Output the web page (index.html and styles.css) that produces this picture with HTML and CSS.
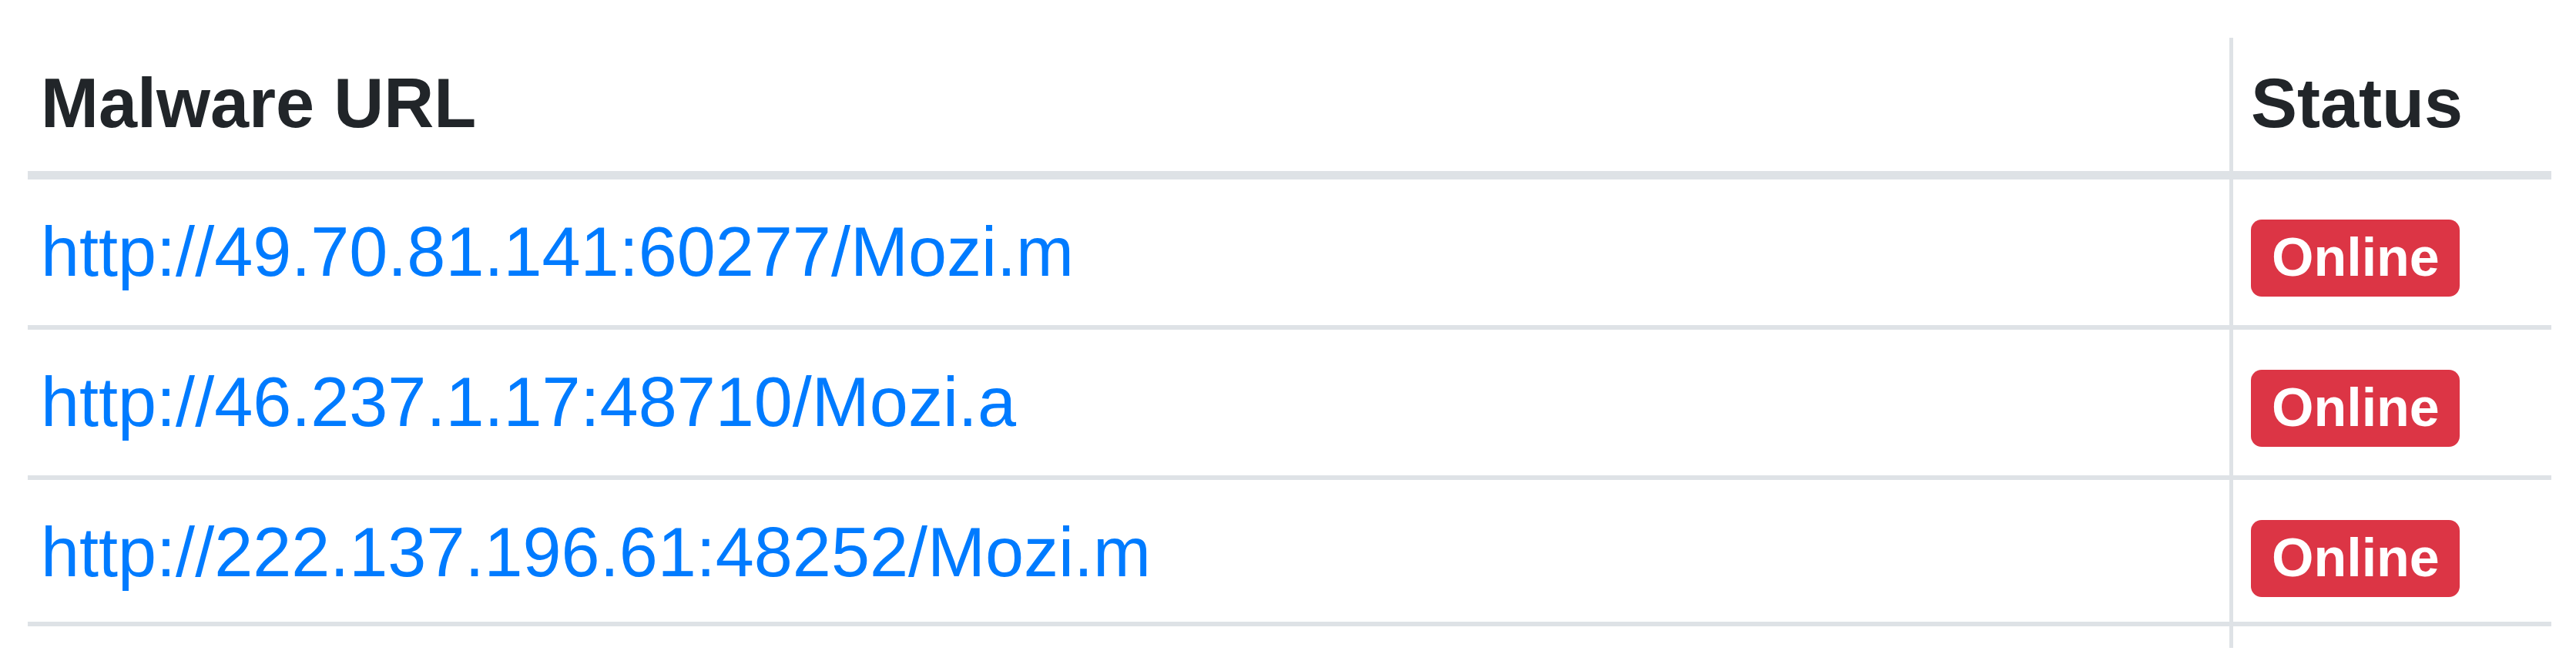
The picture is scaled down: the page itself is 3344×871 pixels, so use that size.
FILE: index.html
```html
<!DOCTYPE html>
<html lang="en">
<head>
<meta charset="utf-8">
<title>Malware URLs</title>
<link rel="stylesheet" href="styles.css">
</head>
<body>
<div class="page">
  <table class="urls">
    <colgroup>
      <col class="col-url">
      <col class="col-status">
    </colgroup>
    <thead>
      <tr>
        <th class="cell-url">Malware URL</th>
        <th class="cell-status">Status</th>
      </tr>
    </thead>
    <tbody>
      <tr>
        <td class="cell-url"><a class="link" href="#">http://49.70.81.141:60277/Mozi.m</a></td>
        <td class="cell-status"><span class="badge">Online</span></td>
      </tr>
      <tr>
        <td class="cell-url"><a class="link" href="#">http://46.237.1.17:48710/Mozi.a</a></td>
        <td class="cell-status"><span class="badge">Online</span></td>
      </tr>
      <tr>
        <td class="cell-url"><a class="link" href="#">http://222.137.196.61:48252/Mozi.m</a></td>
        <td class="cell-status"><span class="badge">Online</span></td>
      </tr>
    </tbody>
    <tfoot>
      <tr class="tail">
        <td class="cell-url"></td>
        <td class="cell-status"></td>
      </tr>
    </tfoot>
  </table>
</div>
</body>
</html>
```

FILE: styles.css
```css
html, body {
  margin: 0;
  padding: 0;
  background: #ffffff;
}

.page {
  padding: 49px 0 0 36px;
  font-family: "Liberation Sans", Arial, sans-serif;
  font-size: 90px;
  line-height: 135px;
  color: #212529;
}

.urls {
  border-collapse: separate;
  border-spacing: 0;
  table-layout: fixed;
  width: 3276px;
}

.col-url {
  width: 2858px;
}

.col-status {
  width: 418px;
}

.urls th,
.urls td {
  text-align: left;
  vertical-align: top;
  white-space: nowrap;
}

.urls th {
  font-weight: 700;
  padding-top: 18px;
  padding-bottom: 20px;
  border-bottom: 11px solid #dee2e6;
}

.urls tbody td {
  padding-top: 27px;
  padding-bottom: 27px;
  border-bottom: 6px solid #dee2e6;
}

.urls tbody tr:last-child td {
  padding-bottom: 22px;
}

.cell-url {
  padding-left: 17px;
  padding-right: 0;
}

.cell-status {
  padding-left: 23px;
  padding-right: 0;
  border-left: 5px solid #dee2e6;
}

.tail td {
  height: 28px;
  padding: 0;
  line-height: 0;
  font-size: 0;
}

.link {
  color: #007bff;
  text-decoration: none;
}

.badge {
  display: inline-block;
  font-size: 70px;
  line-height: 70px;
  font-weight: 700;
  color: #ffffff;
  background: #dc3545;
  padding: 14px 26px 16px 27px;
  border-radius: 14px;
}
```
